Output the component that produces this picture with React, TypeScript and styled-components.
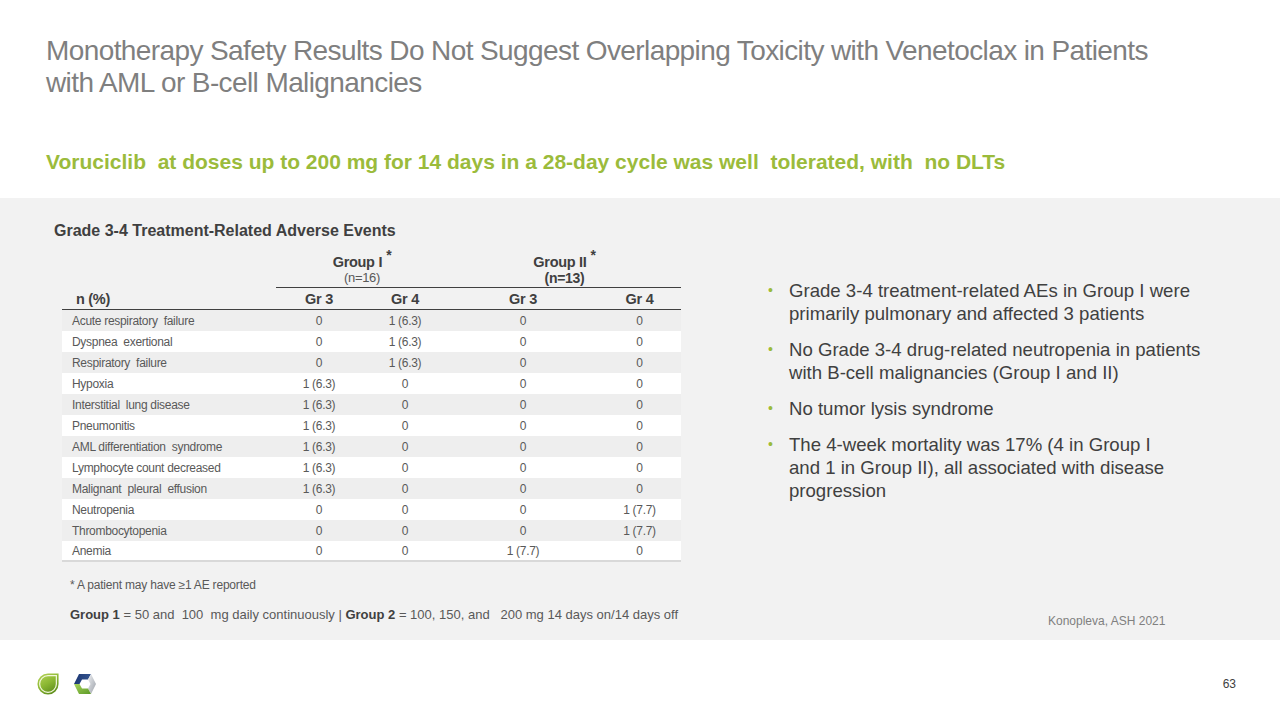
import React from "react";
import styled, { createGlobalStyle } from "styled-components";

const GlobalStyle = createGlobalStyle`
  html, body {
    margin: 0;
    padding: 0;
    background: #ffffff;
  }
  body {
    font-family: "Liberation Sans", Arial, sans-serif;
  }
  * {
    box-sizing: border-box;
  }
`;

const rows = [
  ["Acute respiratory  failure", "0", "1 (6.3)", "0", "0"],
  ["Dyspnea  exertional", "0", "1 (6.3)", "0", "0"],
  ["Respiratory  failure", "0", "1 (6.3)", "0", "0"],
  ["Hypoxia", "1 (6.3)", "0", "0", "0"],
  ["Interstitial  lung disease", "1 (6.3)", "0", "0", "0"],
  ["Pneumonitis", "1 (6.3)", "0", "0", "0"],
  ["AML differentiation  syndrome", "1 (6.3)", "0", "0", "0"],
  ["Lymphocyte count decreased", "1 (6.3)", "0", "0", "0"],
  ["Malignant  pleural  effusion", "1 (6.3)", "0", "0", "0"],
  ["Neutropenia", "0", "0", "0", "1 (7.7)"],
  ["Thrombocytopenia", "0", "0", "0", "1 (7.7)"],
  ["Anemia", "0", "0", "1 (7.7)", "0"],
];

const bullets = [
  ["Grade 3-4 treatment-related AEs in Group I were", "primarily pulmonary and affected 3 patients"],
  ["No Grade 3-4 drug-related neutropenia in patients", "with B-cell malignancies (Group I and II)"],
  ["No tumor lysis syndrome"],
  ["The 4-week mortality was 17% (4 in Group I", "and 1 in Group II), all associated with disease", "progression"],
];

const LeafLogo = () => (
  <svg width="22" height="22" viewBox="0 0 25 25">
    <defs>
      <linearGradient id="leafFill" x1="0" y1="0" x2="0.6" y2="1">
        <stop offset="0" stopColor="#b9d65a" />
        <stop offset="0.55" stopColor="#8cb833" />
        <stop offset="1" stopColor="#5f8f1c" />
      </linearGradient>
    </defs>
    <path d="M12.5 0.5 H24.5 V12.5 A12 12 0 1 1 12.5 0.5 Z" fill="url(#leafFill)" />
    <path
      d="M12.5 3 H22 V12.5 A9.5 9.5 0 1 1 12.5 3 Z"
      fill="none"
      stroke="#f2f7dc"
      strokeWidth="1.4"
    />
  </svg>
);

const HexLogo = () => (
  <svg width="24" height="22" viewBox="0 0 24 22">
    <defs>
      <linearGradient id="hexNavy" x1="0" y1="0" x2="1" y2="0">
        <stop offset="0" stopColor="#1c3773" />
        <stop offset="1" stopColor="#34548f" />
      </linearGradient>
      <linearGradient id="hexSilver" x1="0" y1="0" x2="1" y2="1">
        <stop offset="0" stopColor="#eceef1" />
        <stop offset="1" stopColor="#9ca1a9" />
      </linearGradient>
      <linearGradient id="hexGreen" x1="0" y1="0" x2="1" y2="1">
        <stop offset="0" stopColor="#a8d35c" />
        <stop offset="1" stopColor="#5c9a27" />
      </linearGradient>
    </defs>
    <polygon points="1,11 6,1 18,1 15,6.5 9,6.5 6.5,11" fill="url(#hexNavy)" />
    <polygon points="18,1 23,11 18,21 15,15.5 17.5,11 15,6.5" fill="url(#hexSilver)" />
    <polygon points="18,21 6,21 1,11 6.5,11 9,15.5 15,15.5" fill="url(#hexGreen)" />
  </svg>
);

export default function App() {
  return (
    <>
      <GlobalStyle />
      <Slide>
        <Header>
          <Title>
            Monotherapy Safety Results Do Not Suggest Overlapping Toxicity with Venetoclax in Patients
            <br />
            with AML or B-cell Malignancies
          </Title>
          <Subtitle>
            {"Voruciclib  at doses up to 200 mg for 14 days in a 28-day cycle was well  tolerated, with  no DLTs"}
          </Subtitle>
        </Header>

        <Panel>
          <TableColumn>
            <Caption>Grade 3-4 Treatment-Related Adverse Events</Caption>
            <Grid>
              <GroupCell $span={1} />
              <GroupCell $span={2} $ruled>
                <GroupName>
                  Group I<Star>*</Star>
                </GroupName>
                <GroupCount>(n=16)</GroupCount>
              </GroupCell>
              <GroupCell $span={2} $ruled>
                <GroupName>
                  Group II<Star>*</Star>
                </GroupName>
                <GroupCount $bold>(n=13)</GroupCount>
              </GroupCell>

              <HeadCell $left>n (%)</HeadCell>
              <HeadCell>Gr 3</HeadCell>
              <HeadCell>Gr 4</HeadCell>
              <HeadCell>Gr 3</HeadCell>
              <HeadCell>Gr 4</HeadCell>

              {rows.map((r, i) => (
                <Row key={r[0]} $shade={i % 2 === 0} $last={i === rows.length - 1}>
                  {r.map((c, j) => (
                    <Cell key={j} $left={j === 0}>
                      {c}
                    </Cell>
                  ))}
                </Row>
              ))}
            </Grid>
            <Footnote>* A patient may have ≥1 AE reported</Footnote>
            <Dosing>
              <b>Group 1</b>
              {" = 50 and  100  mg daily continuously | "}
              <b>Group 2</b>
              {" = 100, 150, and   200 mg 14 days on/14 days off"}
            </Dosing>
          </TableColumn>

          <SideColumn>
            <BulletList>
              {bullets.map((lines) => (
                <Bullet key={lines[0]}>
                  {lines.map((l, k) => (
                    <React.Fragment key={k}>
                      {k > 0 && <br />}
                      {l}
                    </React.Fragment>
                  ))}
                </Bullet>
              ))}
            </BulletList>
            <Source>Konopleva, ASH 2021</Source>
          </SideColumn>
        </Panel>

        <Footer>
          <Logos>
            <LeafLogo />
            <HexLogo />
          </Logos>
          <PageNumber>63</PageNumber>
        </Footer>
      </Slide>
    </>
  );
}

const Slide = styled.div`
  width: 1280px;
  height: 720px;
  display: flex;
  flex-direction: column;
  background: #ffffff;
  overflow: hidden;
`;

const Header = styled.div`
  height: 198px;
  padding: 35px 0 0 46px;
`;

const Title = styled.h1`
  margin: 0;
  font-size: 28px;
  font-weight: 400;
  line-height: 32px;
  letter-spacing: -0.6px;
  color: #7f7f7f;
`;

const Subtitle = styled.p`
  margin: 51px 0 0;
  font-size: 21px;
  font-weight: 700;
  line-height: 24px;
  color: #9bbb3b;
  white-space: pre;
`;

const Panel = styled.div`
  height: 442px;
  background: #f2f2f2;
  display: flex;
`;

const TableColumn = styled.div`
  width: 720px;
  padding: 23px 0 0 54px;
`;

const Caption = styled.h3`
  margin: 0 0 11px;
  font-size: 16px;
  font-weight: 700;
  line-height: 20px;
  color: #404040;
`;

const Grid = styled.div`
  margin-left: 8px;
  width: 619px;
  display: grid;
  grid-template-columns: 214px 86px 86px 150px 83px;
  letter-spacing: -0.3px;
`;

const GroupCell = styled.div<{ $span: number; $ruled?: boolean }>`
  grid-column: span ${(p) => p.$span};
  text-align: center;
  padding-top: 2px;
  height: 36px;
  border-bottom: ${(p) => (p.$ruled ? "1px solid #404040" : "none")};
`;

const GroupName = styled.div`
  font-size: 14.5px;
  font-weight: 700;
  line-height: 16px;
  color: #404040;
`;

const Star = styled.span`
  position: relative;
  top: -7px;
  margin-left: 4px;
  font-size: 14px;
`;

const GroupCount = styled.div<{ $bold?: boolean }>`
  font-size: ${(p) => (p.$bold ? "14px" : "13px")};
  font-weight: ${(p) => (p.$bold ? 700 : 400)};
  line-height: 16px;
  color: ${(p) => (p.$bold ? "#404040" : "#595959")};
`;

const HeadCell = styled.div<{ $left?: boolean }>`
  height: 22px;
  padding: 3px 0 0 ${(p) => (p.$left ? "14px" : "0")};
  text-align: ${(p) => (p.$left ? "left" : "center")};
  font-size: 14.5px;
  font-weight: 700;
  line-height: 16px;
  color: #404040;
  border-bottom: 1.5px solid #404040;
`;

const Row = styled.div<{ $shade: boolean; $last: boolean }>`
  grid-column: 1 / -1;
  display: grid;
  grid-template-columns: subgrid;
  height: 21px;
  align-items: center;
  background: ${(p) => (p.$shade ? "#eeeeee" : "#ffffff")};
  border-bottom: ${(p) => (p.$last ? "2px solid #d9d9d9" : "none")};
`;

const Cell = styled.div<{ $left?: boolean }>`
  padding-left: ${(p) => (p.$left ? "10px" : "0")};
  text-align: ${(p) => (p.$left ? "left" : "center")};
  font-size: 12px;
  line-height: 14px;
  color: #595959;
  white-space: pre;
`;

const Footnote = styled.p`
  margin: 16px 0 0 16px;
  font-size: 12px;
  line-height: 14px;
  letter-spacing: -0.2px;
  color: #595959;
`;

const Dosing = styled.p`
  margin: 16px 0 0 16px;
  font-size: 13px;
  line-height: 14px;
  color: #595959;
  white-space: pre;
  b {
    color: #404040;
  }
`;

const SideColumn = styled.div`
  flex: 1;
  display: flex;
  flex-direction: column;
  padding: 81px 0 0 48px;
`;

const BulletList = styled.ul`
  margin: 0;
  padding: 0;
  list-style: none;
`;

const Bullet = styled.li`
  position: relative;
  padding-left: 21px;
  margin-bottom: 13px;
  font-size: 18.6px;
  line-height: 23px;
  color: #404040;
  &::before {
    content: "•";
    position: absolute;
    left: 0;
    top: 0;
    font-size: 14px;
    color: #9bbb3b;
  }
`;

const Source = styled.p`
  margin: auto 0 12px 280px;
  font-size: 12px;
  line-height: 14px;
  color: #808080;
`;

const Footer = styled.div`
  flex: 1;
  display: flex;
  align-items: center;
  justify-content: space-between;
  padding: 8px 44px 0 37px;
`;

const Logos = styled.div`
  display: flex;
  align-items: center;
  gap: 14px;
`;

const PageNumber = styled.span`
  font-size: 12px;
  color: #404040;
`;
